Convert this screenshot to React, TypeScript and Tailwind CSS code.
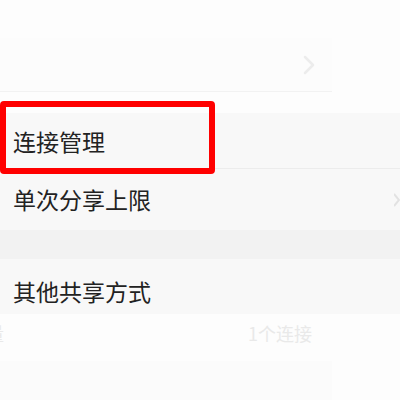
export default function App() {
  const font = { fontFamily: '"Noto Sans CJK SC", "Noto Sans", sans-serif' };
  return (
    <div
      className="relative w-[400px] h-[400px] overflow-hidden bg-[#fdfdfd] flex flex-col"
      style={font}
    >
      {/* faded page behind */}
      <div className="h-[113px] shrink-0 pt-[38px]">
        <div className="w-[332px] h-[54px] bg-[#fcfcfc] border-b border-[#f2f2f2] flex items-center justify-end pr-[17px]">
          <svg width="12" height="20" viewBox="0 0 12 20" fill="none">
            <path d="M2 2l8 8-8 8" stroke="#ececec" strokeWidth="2.5" strokeLinecap="round" strokeLinejoin="round" />
          </svg>
        </div>
      </div>

      {/* zoomed list */}
      <div className="shrink-0 bg-[#f8f8f8] text-[#222] text-[23px] leading-none">
        <div className="h-[56px] flex items-center pl-[13px] pt-[1px] border-b border-[#ececec]">连接管理</div>
        <div className="h-[61px] flex items-center justify-between pl-[13px] pr-0">
          <span>单次分享上限</span>
          <svg width="6" height="16" viewBox="0 0 6 16" fill="none">
            <path d="M0 2l5 6-5 6" stroke="#e2e2e2" strokeWidth="2" />
          </svg>
        </div>
        <div className="h-[29px] bg-[#f2f2f2]" />
        <div className="h-[55px] flex items-center pl-[13px] pt-[10px]">其他共享方式</div>
      </div>

      <div className="flex-1">
        <div className="w-[332px] h-[38px] flex items-center justify-between text-[18px] text-[#e9e9e9]">
          <span className="-ml-[14px]">量</span>
          <span className="mr-[20px]">1个连接</span>
        </div>
        <div className="mt-[9px] w-[332px] h-[40px] bg-[#fbfbfb]" />
      </div>

      <div className="absolute left-0 top-[101px] w-[215px] h-[73px] border-[6px] border-[#ff0000] rounded-[4px]" />
    </div>
  );
}
